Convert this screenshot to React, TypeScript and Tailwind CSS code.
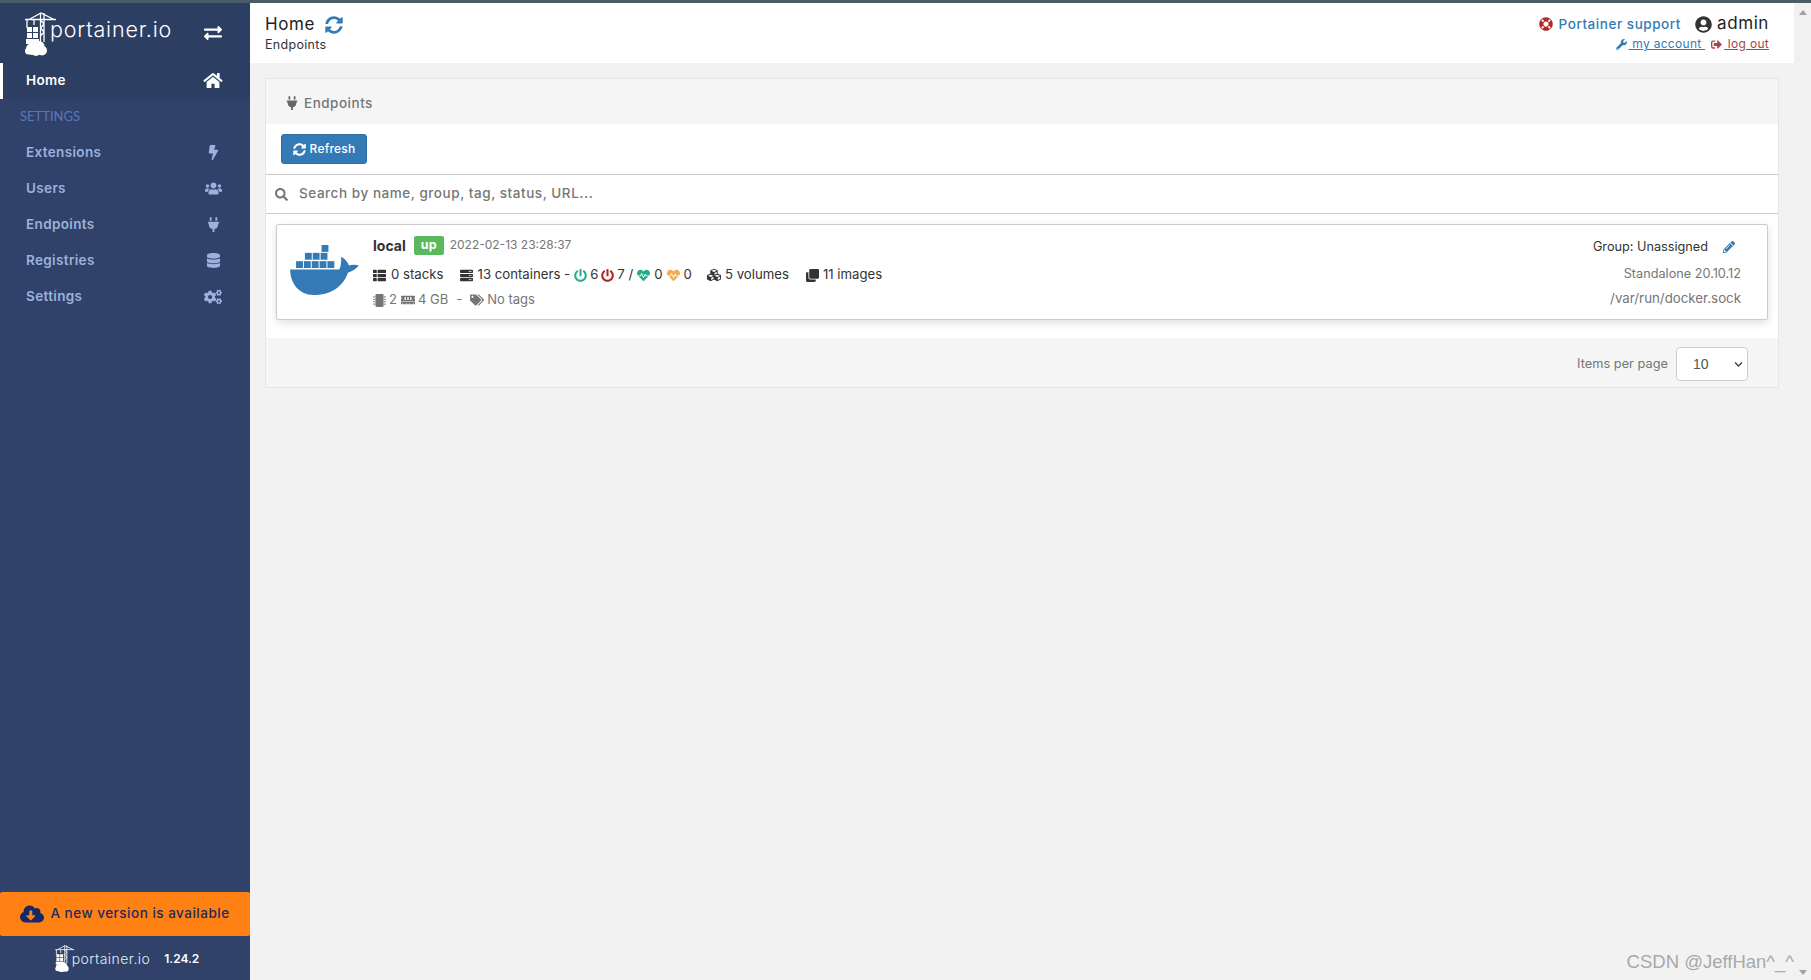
import React from "react";
import {
  FaExchangeAlt, FaHome, FaBolt, FaUsers, FaPlug, FaDatabase, FaCogs, FaSyncAlt, FaSearch, FaThList, FaServer,
  FaPowerOff, FaHeartbeat, FaCubes, FaClone, FaMicrochip, FaMemory, FaTags, FaPencilAlt, FaLifeRing, FaUserCircle,
  FaWrench, FaSignOutAlt, FaCloudDownloadAlt, FaChevronDown,
} from "react-icons/fa";

const font = { fontFamily: '"Inter", "Open Sans", sans-serif' };

function Crane({ className }: { className?: string }) {
  return (
    <svg viewBox="0 0 32 44" className={className} fill="none">
      <g stroke="#fff" strokeWidth="1.3">
        <path d="M0 7.5H31M2 8V16M4 7.5L16 1L29 7.5" />
        <path d="M15.5 1V30M19 1V30M15.5 8L19 12M19 12L15.5 16M15.5 16L19 20M19 20L15.5 24" />
        <path d="M9 8V13" />
      </g>
      <g fill="#fff">
        <rect x="2" y="15" width="5" height="5" />
        <rect x="8" y="15" width="5" height="5" />
        <rect x="2" y="21" width="5" height="5" />
        <rect x="8" y="21" width="5" height="5" />
        <rect x="1" y="27" width="13" height="5" />
        <circle cx="7" cy="37" r="6" />
        <circle cx="14" cy="34.5" r="5.5" />
        <circle cx="17" cy="38.5" r="5" />
        <circle cx="11" cy="39" r="5" />
        <circle cx="3.5" cy="39" r="3.5" />
      </g>
    </svg>
  );
}

function Whale({ className }: { className?: string }) {
  const boxes = [
    [32, 0], [15, 8], [23, 8], [31, 8], [6, 16.5], [14, 16.5], [22, 16.5], [30, 16.5], [38, 16.5],
  ];
  return (
    <svg viewBox="0 0 70 51" className={className}>
      <g fill="#337ab7">
        {boxes.map(([x, y]) => (
          <rect key={`${x}-${y}`} x={x} y={y} width="7" height="7" />
        ))}
        <path d="M0 25H50C52 22 52 17 52 12C56 14 59 18 60 21C63 20 67 20 70 21C67 25 63 27 59 28C55 40 44 51 24 51C9 51 0 39 0 25Z" />
      </g>
    </svg>
  );
}

function NavRow({ label, icon }: { label: string; icon: React.ReactNode }) {
  return (
    <div className="h-9 flex items-center justify-between pl-[26px] pr-[27px] text-[#9cb1dc] text-[13.5px] font-semibold tracking-[0.35px]">
      <span className="-mt-[2px]">{label}</span>
      <span className="w-5 flex justify-center text-[15px] -mt-[1px]">{icon}</span>
    </div>
  );
}

export default function App() {
  return (
    <div className="w-[1811px] h-[980px] overflow-hidden flex flex-col bg-[#f2f2f2] relative" style={font}>
      <div className="h-[3px] bg-[#4a5c66] shrink-0" />
      <div className="flex flex-1 min-h-0">
        {/* sidebar */}
        <aside className="w-[250px] shrink-0 bg-[#30426a] flex flex-col">
          <div className="h-[60px] bg-[#2d3e63] flex items-center justify-between pl-[25px] pr-[27px]">
            <div className="flex items-start">
              <Crane className="w-[32px] h-[44px] mt-[2px]" />
              <span className="text-white text-[21.5px] font-light tracking-[0.8px] -ml-[7px] mt-[1px] leading-[36px]">portainer.io</span>
            </div>
            <FaExchangeAlt className="text-white text-[18px] w-5" />
          </div>
          <div className="h-9 bg-[#2d3e63] border-l-[3px] border-white flex items-center justify-between pl-[23px] pr-[27px] text-white text-[13.5px] font-semibold tracking-[0.35px]">
            <span className="-mt-[2px]">Home</span>
            <FaHome className="text-[17px] w-5 -mt-[1px]" />
          </div>
          <div className="h-9 flex items-center pl-[20px] text-[#5a77ba] text-[13px] font-normal" style={{ fontFamily: '"Lato", sans-serif' }}>SETTINGS</div>
          <NavRow label="Extensions" icon={<FaBolt />} />
          <NavRow label="Users" icon={<FaUsers className="text-[17px]" />} />
          <NavRow label="Endpoints" icon={<FaPlug />} />
          <NavRow label="Registries" icon={<FaDatabase />} />
          <NavRow label="Settings" icon={<FaCogs className="text-[18px]" />} />
          <div className="flex-1" />
          <div className="h-[44px] bg-[#ff8114] rounded-[2px] flex items-center justify-center gap-[6px] text-[#1a2c5e] text-[13.5px] font-medium tracking-[0.5px]">
            <FaCloudDownloadAlt className="text-[24px] text-[#14296a]" />
            <span className="-mt-[2px]">A new version is available</span>
          </div>
          <div className="h-[44px] flex items-center justify-center pt-[1px] pl-[4px]">
            <Crane className="w-[20px] h-[27px]" />
            <span className="text-[#e8ecf4] text-[14px] font-light tracking-[0.45px] -ml-[3px] mr-[14px]">portainer.io</span>
            <span className="text-white text-[12px] font-semibold">1.24.2</span>
          </div>
        </aside>

        {/* main */}
        <main className="flex-1 min-w-0 flex flex-col">
          <header className="h-[60px] bg-white shrink-0 flex justify-between pl-[15px] pr-[10px]">
            <div>
              <div className="flex items-center gap-[10px] mt-[11px] h-[22px] text-[#222] text-[17px] font-normal tracking-[0.6px]">
                <span>Home</span>
                <FaSyncAlt className="text-[#337ab7] text-[18px]" />
              </div>
              <div className="text-[#333] text-[12.5px] mt-[1px] leading-[16px] tracking-[0.3px]">Endpoints</div>
            </div>
            <div className="flex flex-col items-end mt-[10px] pr-[15px]">
              <div className="h-[22px] flex items-center text-[14px]">
                <FaLifeRing className="text-[#b02a2a] text-[14px] mr-[6px]" />
                <span className="text-[#337ab7] text-[13.5px] tracking-[0.55px] font-medium">Portainer support</span>
                <FaUserCircle className="text-[#333] text-[17px] ml-[14px] mr-[5px]" />
                <span className="text-[#222] text-[17px] tracking-[0.6px]">admin</span>
              </div>
              <div className="flex items-center h-[16px] text-[12px] tracking-[0.3px] mt-[1px]">
                <FaWrench className="text-[#337ab7] text-[11px] mr-[2px]" />
                <span className="text-[#337ab7] underline whitespace-pre"> my account </span>
                <FaSignOutAlt className="text-[#a94442] text-[11px] ml-[6px] mr-[2px]" />
                <span className="text-[#a94442] underline whitespace-pre"> log out</span>
              </div>
            </div>
          </header>

          <div className="pl-[15px] pr-[15px] pt-[15px]">
            <section className="bg-white border border-[#e6e6e6] h-[310px] flex flex-col">
              <div className="h-[45px] bg-[#f5f5f5] flex items-center pl-[19px] pt-[3px] text-[#767676] text-[13.5px] font-medium tracking-[0.5px]">
                <FaPlug className="text-[14px] mr-[5px] text-[#666]" />
                <span>Endpoints</span>
              </div>
              <div className="h-[50px] pl-[15px] flex items-start pt-[10px]">
                <button className="h-[30px] w-[86px] bg-[#337ab7] border border-[#2e6da4] rounded-[3px] text-white text-[12px] font-medium flex items-center justify-center gap-[4px] tracking-[0.2px]">
                  <FaSyncAlt className="text-[13px]" /> Refresh
                </button>
              </div>
              <div className="h-[40px] border-y border-[#ccc] flex items-center pl-[9px] text-[#767676]">
                <FaSearch className="text-[13px] mr-[11px]" />
                <span className="text-[13.5px] font-medium tracking-[0.55px] -mt-[2px]">Search by name, group, tag, status, URL...</span>
              </div>
              <div className="flex-1 px-[10px] pt-[10px]">
                <div className="h-[96px] border border-[#ccc] rounded-[2px] bg-white shadow-[0_3px_8px_rgba(0,0,0,0.12)] flex justify-between">
                  <div className="flex">
                    <Whale className="w-[69px] h-[50px] mt-[20px] ml-[13px]" />
                    <div className="ml-[14px] pt-[9px]">
                      <div className="h-[22px] flex items-center">
                        <span className="text-[#333] text-[14px] font-bold">local</span>
                        <span className="ml-[8px] bg-[#5cb85c] text-white text-[12.5px] font-bold w-[30px] h-[19px] rounded-[2px] flex items-center justify-center">up</span>
                        <span className="ml-[6px] text-[#767676] text-[12px] font-normal">2022-02-13 23:28:37</span>
                      </div>
                      <div className="h-[22px] mt-[8px] flex items-center text-[#333] text-[13.2px] font-normal">
                        <FaThList className="text-[13px] mr-[5px]" />
                        <span>0 stacks</span>
                        <FaServer className="text-[13px] ml-[16px] mr-[5px]" />
                        <span>13 containers -</span>
                        <FaPowerOff className="text-[#23ae89] text-[13px] ml-[4px] mr-[3px]" />
                        <span>6</span>
                        <FaPowerOff className="text-[#ae2323] text-[13px] ml-[3px] mr-[3px]" />
                        <span>7 /</span>
                        <FaHeartbeat className="text-[#23ae89] text-[13px] ml-[4px] mr-[4px]" />
                        <span>0</span>
                        <FaHeartbeat className="text-[#f0ad4e] text-[13px] ml-[4px] mr-[4px]" />
                        <span>0</span>
                        <FaCubes className="text-[14px] ml-[15px] mr-[4px]" />
                        <span>5 volumes</span>
                        <FaClone className="text-[13px] ml-[17px] mr-[4px]" />
                        <span>11 images</span>
                      </div>
                      <div className="h-[18px] mt-[5px] flex items-center text-[#767676] text-[13px]">
                        <FaMicrochip className="text-[13px] mr-[3px]" />
                        <span>2</span>
                        <FaMemory className="text-[14px] ml-[4px] mr-[3px]" />
                        <span>4 GB</span>
                        <span className="ml-[8px] mr-[8px]">-</span>
                        <FaTags className="text-[14px] mr-[3px]" />
                        <span>No tags</span>
                      </div>
                    </div>
                  </div>
                  <div className="flex flex-col items-end pr-[26px] pt-[11px] text-[12.7px] text-[#767676]">
                    <div className="h-[22px] flex items-center text-[#333] mr-[6px]">
                      <span>Group: Unassigned</span>
                      <FaPencilAlt className="text-[#337ab7] text-[12px] ml-[15px]" />
                    </div>
                    <div className="h-[22px] mt-[5px] flex items-center">Standalone 20.10.12</div>
                    <div className="h-[22px] mt-[3px] flex items-center text-[13.3px]">/var/run/docker.sock</div>
                  </div>
                </div>
              </div>
              <div className="h-[49px] bg-[#f5f5f5] flex items-center justify-end pr-[30px] pt-[3px]">
                <span className="text-[#767676] text-[12.8px] mr-[8px]">Items per page</span>
                <div className="w-[72px] h-[34px] bg-white border border-[#ccc] rounded-[4px] flex items-center justify-between pl-[16px] pr-[4px] text-[#555] text-[14px]" style={{ fontFamily: '"Liberation Sans", sans-serif' }}>
                  <span>10</span>
                  <FaChevronDown className="text-[9px] text-[#444]" />
                </div>
              </div>
            </section>
          </div>
        </main>

        {/* page scrollbar */}
        <div className="w-[17px] shrink-0 bg-[#f1f1f1] flex flex-col justify-between items-center pt-[7px] pb-[5px]">
          <div className="w-0 h-0 border-x-[4px] border-x-transparent border-b-[5px] border-b-[#a3a3a3]" />
          <div className="w-0 h-0 border-x-[4px] border-x-transparent border-t-[5px] border-t-[#a3a3a3]" />
        </div>
      </div>

      {/* watermark */}
      <div className="absolute right-[17px] top-[949px] text-[#a9a9a9] text-[18.5px] leading-[26px]" style={{ fontFamily: '"Liberation Sans", sans-serif' }}>
        CSDN @JeffHan^_^
      </div>
    </div>
  );
}
